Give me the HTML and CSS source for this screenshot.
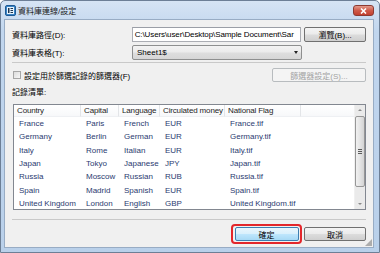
FILE: index.html
```html
<!DOCTYPE html>
<html lang="zh-Hant">
<head>
  <meta charset="UTF-8">
  <title>資料庫連線/設定</title>
  <link rel="stylesheet" href="styles.css">
</head>
<body>

  <div class="window">
    <div class="titlebar">
      <svg class="app-icon" width="11" height="11" viewBox="0 0 11 11">
        <rect x="0.5" y="0.5" width="10" height="10" rx="1.5" fill="#3b86c8" stroke="#1f5a94"/>
        <rect x="2" y="2" width="7" height="7" fill="#e8f3fc"/>
        <rect x="3" y="3" width="1.5" height="5" fill="#1b3550"/>
        <rect x="5.5" y="3" width="2.5" height="1" fill="#1b3550"/>
        <rect x="5.5" y="5" width="2.5" height="1" fill="#1b3550"/>
        <rect x="5.5" y="7" width="2.5" height="1" fill="#1b3550"/>
      </svg>
      <span class="title">資料庫連線/設定</span>
      <div class="close">
        <svg width="7" height="6" viewBox="0 0 7 6">
          <path d="M1 0.5 L6 5.5 M6 0.5 L1 5.5" stroke="#fff" stroke-width="1.6"/>
        </svg>
      </div>
    </div>

    <div class="client">
      <div class="field">
        <label class="lbl">資料庫路徑(D):</label>
        <div class="textbox">C:\Users\user\Desktop\Sample Document\Sar</div>
        <button class="btn browse">瀏覽(B)...</button>
      </div>

      <div class="field second">
        <label class="lbl">資料庫表格(T):</label>
        <div class="combo">
          <span>Sheet1$</span>
          <span class="arrow"></span>
        </div>
      </div>

      <div class="sep"></div>

      <div class="field filter">
        <span class="check"></span>
        <span class="check-lbl">設定用於篩選記錄的篩選器(F)</span>
        <button class="btn disabled">篩選器設定(S)...</button>
      </div>

      <div class="caption">記錄清單:</div>

      <div class="list">
        <div class="table" id="table">
          <div class="th">Country</div>
          <div class="th">Capital</div>
          <div class="th">Language</div>
          <div class="th">Circulated money</div>
          <div class="th">National Flag</div>
          <div class="th last"></div>
        </div>
        <div class="scrollbar">
          <div class="sb-btn"><span class="up"></span></div>
          <div class="sb-thumb"><span class="grip"></span></div>
          <div class="sb-track"></div>
          <div class="sb-btn"><span class="down"></span></div>
        </div>
      </div>

      <div class="sep bottom"></div>

      <div class="footer">
        <div class="mark">
          <button class="btn default">確定</button>
        </div>
        <button class="btn cancel">取消</button>
      </div>
      <div class="grip-corner"></div>
    </div>
  </div>

  <script>
    const rows = [
      ['France', 'Paris', 'French', 'EUR', 'France.tif'],
      ['Germany', 'Berlin', 'German', 'EUR', 'Germany.tif'],
      ['Italy', 'Rome', 'Italian', 'EUR', 'Italy.tif'],
      ['Japan', 'Tokyo', 'Japanese', 'JPY', 'Japan.tif'],
      ['Russia', 'Moscow', 'Russian', 'RUB', 'Russia.tif'],
      ['Spain', 'Madrid', 'Spanish', 'EUR', 'Spain.tif'],
      ['United Kingdom', 'London', 'English', 'GBP', 'United Kingdom.tif']
    ];
    const table = document.getElementById('table');
    rows.forEach(r => {
      r.concat(['']).forEach(text => {
        const td = document.createElement('div');
        td.className = 'td';
        td.textContent = text;
        table.appendChild(td);
      });
    });
  </script>

</body>
</html>
```

FILE: styles.css
```css
html, body {
  margin: 0;
  width: 380px;
  height: 253px;
  overflow: hidden;
}

body {
  font-family: 'Liberation Sans', 'Noto Sans CJK TC', sans-serif;
  font-size: 8px;
  color: #000;
}

.window {
  box-sizing: border-box;
  width: 380px;
  height: 253px;
  display: flex;
  flex-direction: column;
  border: 1px solid #6d7f96;
  border-radius: 5px 5px 0 0;
  background: linear-gradient(#d6e4f4, #c1d6ee 30px, #b9d0ea);
}

.titlebar {
  height: 18px;
  display: flex;
  align-items: center;
  padding: 0 5px 0 4px;
}

.app-icon {
  margin-right: 2px;
}

.title {
  flex: 1;
  color: #1b1b1b;
}

.close {
  width: 19px;
  height: 9px;
  margin-top: 1px;
  border: 1px solid #8c3a32;
  border-radius: 3px;
  background: linear-gradient(#e39a8c, #cf5b4a 50%, #c2402f);
  display: flex;
  align-items: center;
  justify-content: center;
}

.client {
  position: relative;
  flex: 1;
  margin: 0 5px 4px 3px;
  border: 1px solid #98acc4;
  background: #f0f0f0;
  padding: 7px 7px 0 7px;
  display: flex;
  flex-direction: column;
}

.field {
  display: flex;
  align-items: center;
  height: 15px;
}

.field.second {
  margin-top: 3px;
  height: 14px;
}

.lbl {
  width: 120px;
}

.textbox {
  box-sizing: border-box;
  width: 170px;
  height: 15px;
  border: 1px solid #abadb3;
  border-top-color: #9a9ea6;
  background: #fff;
  padding: 0 2px;
  line-height: 13px;
  letter-spacing: -0.1px;
  white-space: nowrap;
  overflow: hidden;
}

.btn {
  box-sizing: border-box;
  height: 15px;
  padding: 0;
  font-family: inherit;
  font-size: 8px;
  color: #000;
  border: 1px solid #707070;
  border-radius: 2px;
  background: linear-gradient(#f4f4f4, #ebebeb 48%, #dcdcdc 52%, #cfcfcf);
}

.browse {
  width: 62px;
  margin-left: 3px;
}

.combo {
  box-sizing: border-box;
  width: 170px;
  height: 15px;
  display: flex;
  align-items: center;
  justify-content: space-between;
  padding: 0 3px 0 4px;
  border: 1px solid #8e8f8f;
  border-radius: 2px;
  background: linear-gradient(#f3f3f3, #ebebeb 48%, #dedede 52%, #d6d6d6);
}

.arrow {
  width: 0;
  height: 0;
  border-left: 2.5px solid transparent;
  border-right: 2.5px solid transparent;
  border-top: 3px solid #222;
}

.sep {
  height: 1px;
  margin-top: 3px;
  background: #c9c9c9;
}

.field.filter {
  margin-top: 5px;
  height: 14px;
}

.check {
  box-sizing: border-box;
  width: 8px;
  height: 8px;
  margin: 0 3px 0 1px;
  border: 1px solid #a6a6a6;
  background: linear-gradient(135deg, #dcdcdc, #f6f6f6);
}

.check-lbl {
  flex: 1;
}

.disabled {
  width: 94px;
  height: 14px;
  color: #a3a3a3;
  border-color: #b8bcbf;
  background: #f4f4f4;
}

.caption {
  margin-top: 5px;
  line-height: 11px;
}

.list {
  box-sizing: border-box;
  height: 106px;
  margin-top: 6px;
  margin-left: 1px;
  border: 1px solid #828790;
  background: #fff;
  display: flex;
}

.table {
  flex: 1;
  display: grid;
  grid-template-columns: 67px 38px 41px 65px 76px 1fr;
  grid-template-rows: 12px;
  grid-auto-rows: 13.33px;
}

.th {
  padding-left: 3px;
  line-height: 12px;
  color: #1e1e1e;
  letter-spacing: -0.15px;
  border-right: 1px solid #e3e5e8;
  border-bottom: 1px solid #eef0f3;
  background: linear-gradient(#fff, #f7f8fa);
  white-space: nowrap;
  overflow: hidden;
}

.th.last {
  border-right: none;
}

.td {
  padding-left: 5px;
  line-height: 13.33px;
  color: #2b3b70;
  white-space: nowrap;
}

.scrollbar {
  width: 10px;
  display: flex;
  flex-direction: column;
  background: #eaeaea;
  border-left: 1px solid #f0f0f0;
}

.sb-btn {
  height: 10px;
  display: flex;
  align-items: center;
  justify-content: center;
}

.up, .down {
  width: 0;
  height: 0;
  border-left: 2px solid transparent;
  border-right: 2px solid transparent;
}

.up {
  border-bottom: 2px solid #8a8a8a;
}

.down {
  border-top: 2px solid #8a8a8a;
}

.sb-thumb {
  box-sizing: border-box;
  height: 71px;
  margin: 1px 0;
  border: 1px solid #979797;
  border-radius: 2px;
  background: linear-gradient(90deg, #f1f1f1, #e4e4e4 50%, #d4d4d4);
  display: flex;
  align-items: center;
  justify-content: center;
}

.grip {
  width: 4px;
  height: 5px;
  background: repeating-linear-gradient(#5a5a5a 0 1px, transparent 1px 2px);
}

.sb-track {
  flex: 1;
}

.sep.bottom {
  margin-top: 9px;
}

.footer {
  margin-top: 4px;
  display: flex;
  align-items: center;
  justify-content: flex-end;
}

.mark {
  box-sizing: border-box;
  width: 71px;
  height: 20px;
  border: 2px solid #e3262b;
  border-radius: 4px;
  display: flex;
  align-items: center;
  justify-content: center;
}

.default {
  width: 64px;
  height: 14px;
  border-color: #3c7fb1;
  background: linear-gradient(#eaf6fd, #d9f0fc 48%, #bee6fd 52%, #a7d9f5);
}

.cancel {
  width: 62px;
  height: 14px;
  margin-left: 2px;
}

.grip-corner {
  position: absolute;
  right: 1px;
  bottom: 1px;
  width: 7px;
  height: 7px;
  background: radial-gradient(circle, #a8a8a8 0.7px, transparent 0.8px) 0 0 / 2px 2px;
  clip-path: polygon(100% 0, 100% 100%, 0 100%);
}
```
